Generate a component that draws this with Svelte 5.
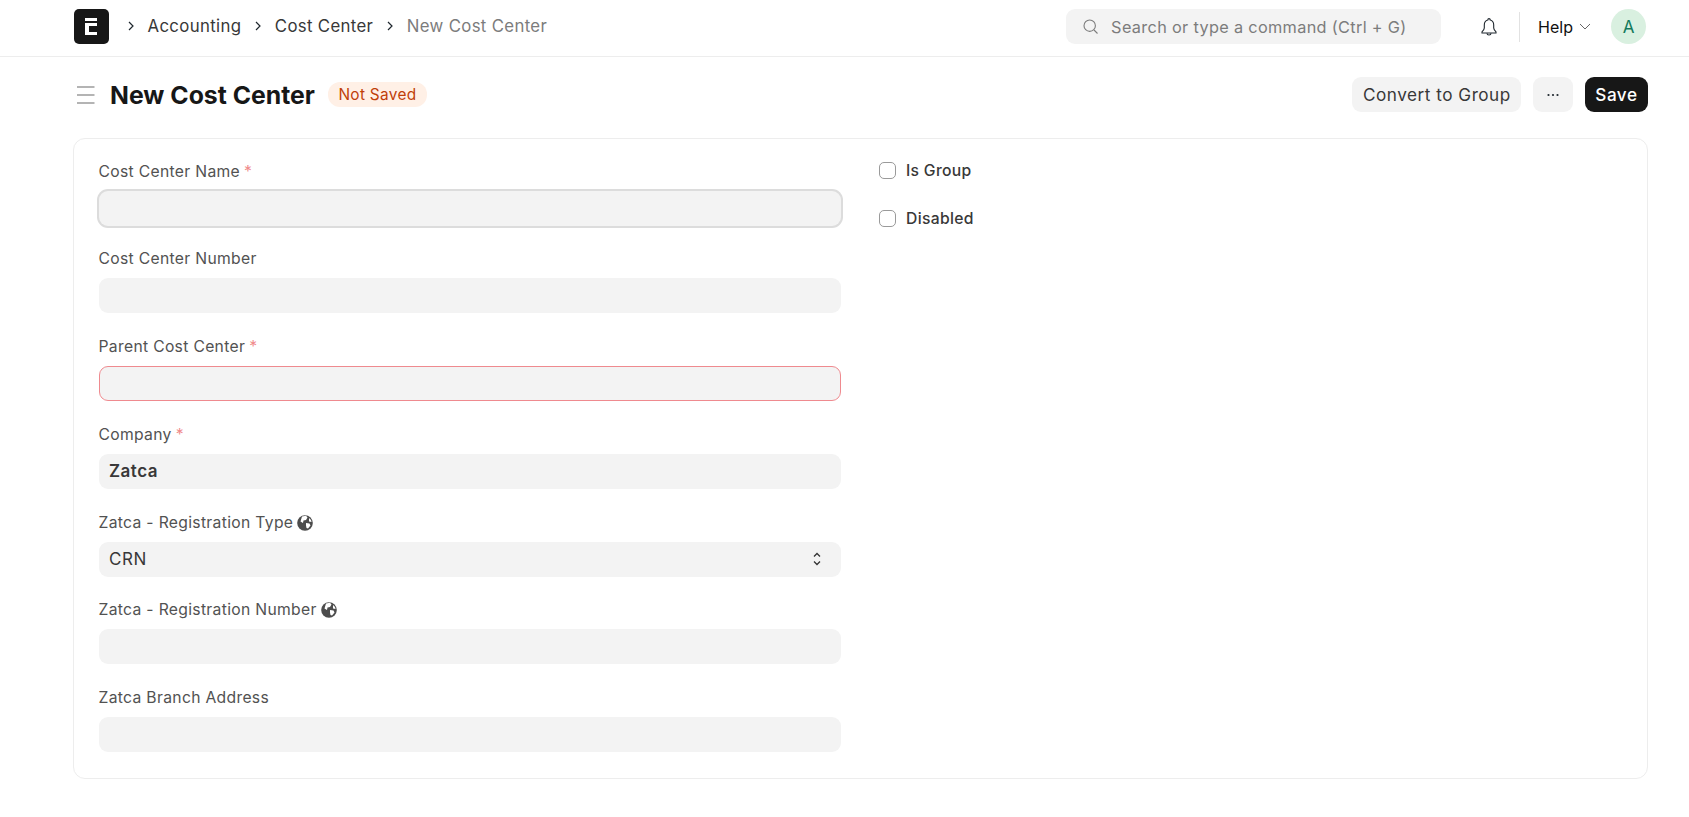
<script lang="ts">
  const crumbs = ["Accounting", "Cost Center"];

  const fields = [
    { label: "Cost Center Name", required: true, kind: "focus" },
    { label: "Cost Center Number" },
    { label: "Parent Cost Center", required: true, kind: "error" },
    { label: "Company", required: true, value: "Zatca", bold: true },
    { label: "Zatca - Registration Type", globe: true, value: "CRN", select: true },
    { label: "Zatca - Registration Number", globe: true },
    { label: "Zatca Branch Address" },
  ];
</script>

<header class="navbar">
  <div class="nav-left">
    <div class="logo">
      <svg width="35" height="35" viewBox="0 0 35 35"><path d="M11 9h12v3H11zM11 14h12v3h-8v6h8v3H11z" fill="#fff" /></svg>
    </div>
    <nav class="crumbs">
      {#each crumbs as crumb}
        <svg class="sep" width="8" height="10" viewBox="0 0 8 10"><path d="M2 1l4 4-4 4" fill="none" stroke="#1f272e" stroke-width="1.2" /></svg>
        <span>{crumb}</span>
      {/each}
      <svg class="sep" width="8" height="10" viewBox="0 0 8 10"><path d="M2 1l4 4-4 4" fill="none" stroke="#1f272e" stroke-width="1.2" /></svg>
      <span class="current">New Cost Center</span>
    </nav>
  </div>
  <div class="nav-right">
    <div class="search">
      <svg width="17" height="17" viewBox="0 0 17 17" fill="none" stroke="#7c7c7c" stroke-width="1.1"><circle cx="7.7" cy="7.7" r="5.7" /><path d="M12 12l3.5 3.5" /></svg>
      <span>Search or type a command (Ctrl + G)</span>
    </div>
    <svg class="bell" width="18" height="20" viewBox="0 0 18 20" fill="none" stroke="#1f272e" stroke-width="1.1"><path d="M7.800 3C5.600 3.600 4.300 5.400 4.300 8v3c0 1.500-1.300 2.800-2.300 3.800v1.200h14v-1.200c-1-1-2.300-2.300-2.300-3.800V8c0-2.600-1.300-4.400-3.500-5 0-1.800-2.400-1.800-2.400 0z" /><path d="M7 16.200c0 2.400 4 2.400 4 0" /></svg>
    <div class="divider"></div>
    <div class="help">
      <span>Help</span>
      <svg width="12" height="7" viewBox="0 0 12 7"><path d="M1 1l5 5 5-5" fill="none" stroke="#555" stroke-width="0.9" /></svg>
    </div>
    <div class="avatar">A</div>
  </div>
</header>

<main class="page">
  <div class="page-head">
    <div class="title-wrap">
      <svg class="menu" width="18" height="18" viewBox="0 0 18 18" stroke="#6b6b6b" stroke-width="1.2"><path d="M0 1h17.500M0 9h17.500M0 17h17.500" /></svg>
      <h1>New Cost Center</h1>
      <span class="pill">Not Saved</span>
    </div>
    <div class="actions">
      <button class="btn">Convert to Group</button>
      <button class="btn more">
        <svg width="14" height="4" viewBox="0 0 14 4" fill="#1f272e"><circle cx="2.500" cy="2" r="1.100" /><circle cx="7" cy="2" r="1.100" /><circle cx="11.500" cy="2" r="1.100" /></svg>
      </button>
      <button class="btn primary">Save</button>
    </div>
  </div>

  <section class="card">
    <div class="col">
      {#each fields as field}
        <div class="field">
          <div class="label">
            {field.label}
            {#if field.required}<span class="req">*</span>{/if}
            {#if field.globe}
              <svg class="globe" width="16" height="16" viewBox="0 0 16 16">
                <circle cx="8" cy="8" r="7.800" fill="#4c4c4c" />
                <path d="M5 1.500l4-.8 1.500 1.800-1.500 2.500-2.500.5-.5 2.500-2.500-1.500zM9 8l3.500.5 1 2-2.500 3-1.500-.5-.5-2.500zM12 3l2 2 .5 2-2.500-.5z" fill="#fff" />
              </svg>
            {/if}
          </div>
          <div class="input {field.kind ?? ''}" class:bold={field.bold}>
            {field.value ?? ""}
            {#if field.select}
              <svg class="updown" width="10" height="18" viewBox="0 0 10 18" fill="none" stroke="#333" stroke-width="1.300"><path d="M2 6.500l3-3 3 3M2 11.500l3 3 3-3" /></svg>
            {/if}
          </div>
        </div>
      {/each}
    </div>
    <div class="col side">
      <label class="check"><span class="box"></span>Is Group</label>
      <label class="check"><span class="box"></span>Disabled</label>
    </div>
  </section>
</main>

<style>
  :global(body) {
    font-family: Inter, "Liberation Sans", sans-serif;
    background: #fff;
    color: #1f272e;
  }

  .navbar {
    height: 57px;
    box-sizing: border-box;
    border-bottom: 1px solid #ededed;
    display: flex;
    align-items: center;
    justify-content: space-between;
    padding: 0 43px 3px 74px;
  }

  .nav-left,
  .nav-right,
  .crumbs {
    display: flex;
    align-items: center;
  }

  .logo {
    width: 35px;
    height: 35px;
    border-radius: 5px;
    background: #171717;
  }

  .logo svg {
    display: block;
  }

  .crumbs {
    margin-left: 18px;
    margin-top: -1px;
    font-size: 16.800px;
    letter-spacing: 0.02em;
    color: #383838;
  }

  .sep {
    margin-right: 12.500px;
  }

  .crumbs span {
    margin-right: 13px;
  }

  .current {
    color: #7c7c7c;
  }

  .search {
    width: 375px;
    height: 35px;
    box-sizing: border-box;
    background: #f3f3f3;
    border-radius: 9px;
    display: flex;
    align-items: center;
    gap: 12px;
    padding-left: 16px;
    font-size: 16.300px;
    letter-spacing: 0.02em;
    color: #7c7c7c;
    margin-right: 39px;
  }

  .bell {
    margin-right: 21px;
  }

  .divider {
    width: 1px;
    height: 30px;
    background: #e2e2e2;
    margin-right: 18px;
  }

  .help {
    display: flex;
    align-items: center;
    gap: 6px;
    font-size: 16px;
    color: #111;
    margin-right: 20px;
  }

  .avatar {
    width: 35px;
    height: 35px;
    border-radius: 50%;
    background: #d9f0e0;
    color: #137a5c;
    display: flex;
    align-items: center;
    justify-content: center;
    font-size: 17px;
  }

  .page {
    padding: 0 41px 0 73px;
  }

  .page-head {
    height: 81px;
    box-sizing: border-box;
    padding-bottom: 6px;
    display: flex;
    align-items: center;
    justify-content: space-between;
  }

  .title-wrap {
    display: flex;
    align-items: center;
  }

  .menu {
    margin-left: 4px;
    margin-right: 15px;
  }

  h1 {
    font-size: 24.800px;
    font-weight: 700;
    margin: 0 13px 0 0;
    color: #171717;
  }

  .pill {
    background: #fff0e6;
    color: #bf3f0a;
    font-size: 15.400px;
    letter-spacing: 0.02em;
    padding: 3px 10.500px;
    border-radius: 12px;
  }

  .actions {
    display: flex;
    gap: 12px;
  }

  .btn {
    height: 35px;
    padding: 0 10px 0 11px;
    border: none;
    border-radius: 9px;
    background: #f3f3f3;
    font-family: inherit;
    font-size: 17.150px;
    letter-spacing: 0.03em;
    color: #383838;
  }

  .more {
    width: 40px;
    padding: 0;
    display: flex;
    align-items: center;
    justify-content: center;
  }

  .primary {
    background: #171717;
    color: #fff;
    font-weight: 500;
    padding: 0 10.500px;
  }

  .card {
    border: 1px solid #ededed;
    border-radius: 12px;
    padding: 23.500px 25px 13px;
    display: grid;
    grid-template-columns: 742px 1fr;
    gap: 38px;
    height: 641px;
    box-sizing: border-box;
  }

  .field {
    height: 87.750px;
  }

  .label {
    font-size: 15.700px;
    letter-spacing: 0.02em;
    line-height: 18px;
    color: #525252;
    margin-bottom: 10px;
    margin-left: -0.500px;
    display: flex;
    align-items: center;
    gap: 4px;
  }

  .req {
    color: #f08a8a;
  }

  .input {
    height: 35px;
    box-sizing: border-box;
    background: #f3f3f3;
    border-radius: 9px;
    padding: 0 10px;
    display: flex;
    align-items: center;
    justify-content: space-between;
    font-size: 17px;
    letter-spacing: 0.03em;
    color: #383838;
  }

  .bold {
    font-weight: 600;
  }

  .focus {
    box-shadow: 0 0 0 2px #dcdcdc;
  }

  .error {
    border: 1px solid #ef8a8f;
  }

  .updown {
    margin-right: 9px;
  }

  .side {
    margin-top: -1.500px;
  }

  .check {
    display: flex;
    align-items: center;
    gap: 10px;
    height: 18px;
    margin-bottom: 30px;
    font-size: 15.700px;
    letter-spacing: 0.02em;
    font-weight: 500;
    color: #383838;
  }

  .box {
    width: 17px;
    height: 17px;
    box-sizing: border-box;
    border: 1px solid #9a9a9a;
    border-radius: 5px;
    background: #fff;
  }
</style>
